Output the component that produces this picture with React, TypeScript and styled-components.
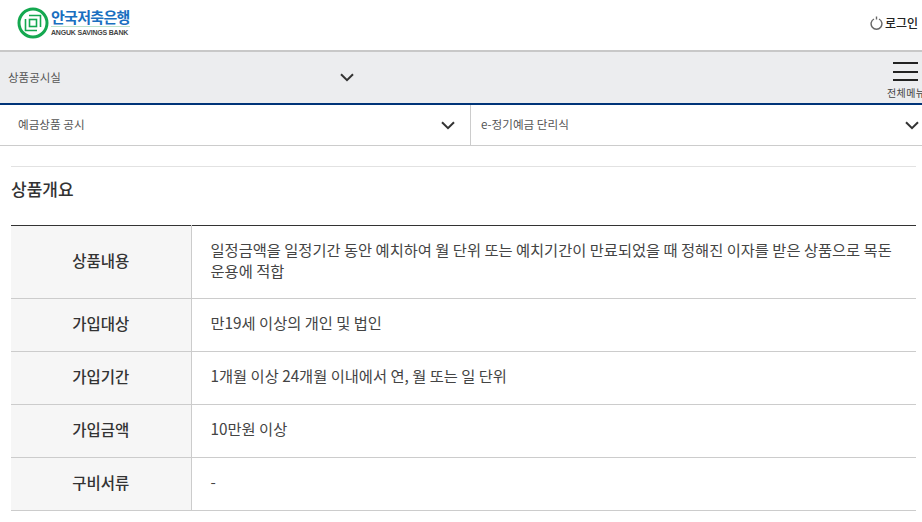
import React from "react";
import styled, { createGlobalStyle } from "styled-components";

const GlobalStyle = createGlobalStyle`
  html, body {
    margin: 0;
    padding: 0;
    background: #fff;
    overflow: hidden;
  }
  body {
    font-family: "Noto Sans CJK KR", "Noto Sans", sans-serif;
    color: #333;
  }
  * {
    box-sizing: border-box;
  }
`;

const Chevron = () => (
  <svg width="14" height="9" viewBox="0 0 14 9" fill="none">
    <path d="M1 1.2 L7 7.2 L13 1.2" stroke="#333" strokeWidth="2" />
  </svg>
);

const rows = [
  {
    label: "상품내용",
    text: "일정금액을 일정기간 동안 예치하여 월 단위 또는 예치기간이 만료되었을 때 정해진 이자를 받은 상품으로 목돈 운용에 적합",
    tall: true,
  },
  { label: "가입대상", text: "만19세 이상의 개인 및 법인" },
  { label: "가입기간", text: "1개월 이상 24개월 이내에서 연, 월 또는 일 단위" },
  { label: "가입금액", text: "10만원 이상" },
  { label: "구비서류", text: "-" },
];

const App = () => {
  return (
    <Page>
      <GlobalStyle />
      <Header>
        <Logo>
          <svg width="32" height="32" viewBox="0 0 32 32" fill="none">
            <circle cx="16" cy="16" r="14" stroke="#14a850" strokeWidth="3" />
            <path d="M12 8.5 H23.5 V20 M20 23.5 H8.5 V12" stroke="#14a850" strokeWidth="1.6" />
            <rect x="12.5" y="12.5" width="7" height="7" stroke="#14a850" strokeWidth="1.6" />
          </svg>
          <LogoText>
            <LogoName>안국저축은행</LogoName>
            <LogoSub>ANGUK SAVINGS BANK</LogoSub>
          </LogoText>
        </Logo>
        <Login>
          <svg width="13" height="14" viewBox="0 0 13 14" fill="none">
            <path d="M4 3 A5.4 5.4 0 1 0 9 3" stroke="#666" strokeWidth="1.4" />
            <path d="M6.5 0.5 V3.5" stroke="#666" strokeWidth="1.4" />
          </svg>
          <span>로그인</span>
        </Login>
      </Header>
      <Nav>
        <NavSelect>
          <NavLabel>상품공시실</NavLabel>
          <Chevron />
        </NavSelect>
        <MenuButton>
          <Burger>
            <BurgerLine />
            <BurgerLine />
            <BurgerLine />
          </Burger>
          <MenuText>전체메뉴</MenuText>
        </MenuButton>
      </Nav>
      <SubNav>
        <SubItem $first>
          <SubLabel>예금상품 공시</SubLabel>
          <Chevron />
        </SubItem>
        <SubItem>
          <SubLabel>e-정기예금 단리식</SubLabel>
          <Chevron />
        </SubItem>
      </SubNav>
      <Content>
        <Title>상품개요</Title>
        <Table>
          <tbody>
            {rows.map((r) => (
              <Row key={r.label} $tall={r.tall}>
                <Th>{r.label}</Th>
                <Td>{r.text}</Td>
              </Row>
            ))}
          </tbody>
        </Table>
      </Content>
    </Page>
  );
};

export default App;

const Page = styled.div`
  width: 922px;
  height: 522px;
  overflow: hidden;
`;

const Header = styled.header`
  height: 52px;
  display: flex;
  align-items: center;
  justify-content: space-between;
  padding: 0 4px 5px 17px;
  border-bottom: 2px solid #c8c8c8;
`;

const Logo = styled.div`
  display: flex;
  align-items: center;
  gap: 2px;
`;

const LogoText = styled.div`
  display: flex;
  flex-direction: column;
`;

const LogoName = styled.div`
  font-size: 15px;
  line-height: 19px;
  font-weight: 700;
  color: #1a6fc0;
  letter-spacing: -0.7px;
  border-bottom: 1px solid #bfe3cc;
`;

const LogoSub = styled.div`
  font-family: "Liberation Sans", sans-serif;
  font-size: 7px;
  line-height: 11px;
  font-weight: 700;
  color: #444;
  letter-spacing: -0.2px;
`;

const Login = styled.div`
  display: flex;
  align-items: center;
  gap: 2px;
  font-size: 12px;
  font-weight: 500;
  color: #222;
`;

const Nav = styled.nav`
  height: 53px;
  display: flex;
  justify-content: space-between;
  background: #ecedef;
  border-bottom: 2px solid #003478;
`;

const NavSelect = styled.div`
  width: 355px;
  padding: 0 1px 0 8px;
  display: flex;
  align-items: center;
  justify-content: space-between;
`;

const NavLabel = styled.span`
  font-size: 11.5px;
  color: #555;
  margin-top: -2px;
`;

const MenuButton = styled.div`
  width: 35px;
  height: 51px;
  display: flex;
  flex-direction: column;
  align-items: flex-start;
  overflow: hidden;
  white-space: nowrap;
`;

const Burger = styled.div`
  margin: 10px 0 0 6px;
  width: 25px;
  height: 19px;
  display: flex;
  flex-direction: column;
  justify-content: space-between;
`;

const BurgerLine = styled.span`
  display: block;
  height: 2px;
  background: #222;
`;

const MenuText = styled.span`
  font-size: 10px;
  line-height: 14px;
  margin-top: 5px;
  color: #444;
  letter-spacing: 0.4px;
`;

const SubNav = styled.div`
  height: 41px;
  display: flex;
  border-bottom: 1px solid #ccc;
`;

const SubItem = styled.div<{ $first?: boolean }>`
  flex: none;
  width: ${(p) => (p.$first ? "471px" : "451px")};
  display: flex;
  align-items: center;
  justify-content: space-between;
  padding: ${(p) => (p.$first ? "0 15px 0 18px" : "0 3px 0 10px")};
  border-right: ${(p) => (p.$first ? "1px solid #ccc" : "none")};
`;

const SubLabel = styled.span`
  font-size: 11.6px;
  color: #555;
  margin-top: -2px;
`;

const Content = styled.main`
  margin: 20px 6px 0 11px;
  border-top: 1px solid #e2e2e2;
`;

const Title = styled.h2`
  margin: 0;
  height: 58px;
  padding-top: 10px;
  font-size: 17px;
  line-height: 24px;
  font-weight: 500;
  color: #333;
`;

const Table = styled.table`
  width: 905px;
  border-collapse: collapse;
  table-layout: fixed;
  border-top: 1px solid #333;
`;

const Row = styled.tr<{ $tall?: boolean }>`
  height: ${(p) => (p.$tall ? "73px" : "53px")};
  border-bottom: 1px solid #ccc;
`;

const Th = styled.th`
  width: 180px;
  background: #f6f6f6;
  border-right: 1px solid #ccc;
  font-size: 15.5px;
  font-weight: 500;
  color: #333;
  text-align: center;
  padding: 0 0 5px;
`;

const Td = styled.td`
  padding: 0 19px 5px;
  font-size: 15.3px;
  line-height: 21px;
  color: #444;
  word-break: keep-all;
`;
